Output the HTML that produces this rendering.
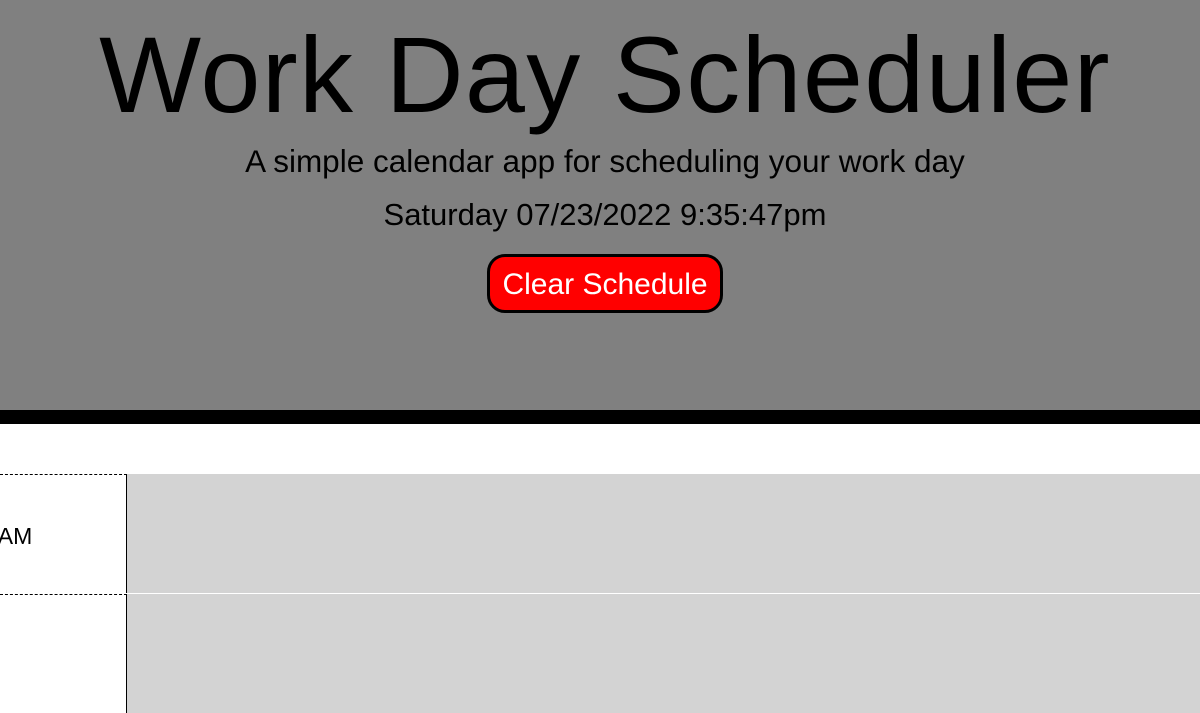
<!DOCTYPE html>
<html><head><style>
body{margin:0;width:1200px;height:600px;overflow:hidden;font-family:"Liberation Sans",sans-serif;background:#fff}
header{position:absolute;left:0;top:0;width:1200px;height:410px;background:#808080;border-bottom:14px solid #000;text-align:center;color:#000}
h1{position:absolute;left:5px;width:1200px;top:10px;margin:0;font-weight:normal;font-size:108px;line-height:130px;text-align:center;letter-spacing:1.3px}
.sub{position:absolute;left:5px;width:1200px;top:143px;font-size:31.5px;line-height:36px}
.date{position:absolute;left:5px;width:1200px;top:197px;font-size:31px;line-height:36px}
.btn{position:absolute;left:487px;top:254px;width:230px;height:53px;box-sizing:content-box;border:3px solid #000;border-radius:18px;background:#f00;color:#fff;font-size:30px;line-height:56px;text-align:center}
.row{position:absolute;left:0;top:474px;width:1200px;height:119px}
.hour{position:absolute;left:0;top:0;width:127px;height:119px;border-top:1px dashed #000;border-right:1px solid #000;box-sizing:border-box}
.hour span{position:absolute;left:-15px;top:48px;font-size:23px}
.ta{position:absolute;left:127px;top:0;width:1073px;height:119px;background:#d3d3d3}
.row2{position:absolute;left:0;top:594px;width:1200px;height:6px}
</style></head><body>
<header>
<h1>Work Day Scheduler</h1>
<div class="sub">A simple calendar app for scheduling your work day</div>
<div class="date">Saturday 07/23/2022 9:35:47pm</div>
<div class="btn">Clear Schedule</div>
</header>
<div class="row"><div class="hour"><span>9AM</span></div><div class="ta"></div></div>
<div class="row2"><div class="hour"></div><div class="ta"></div></div>
</body></html>
